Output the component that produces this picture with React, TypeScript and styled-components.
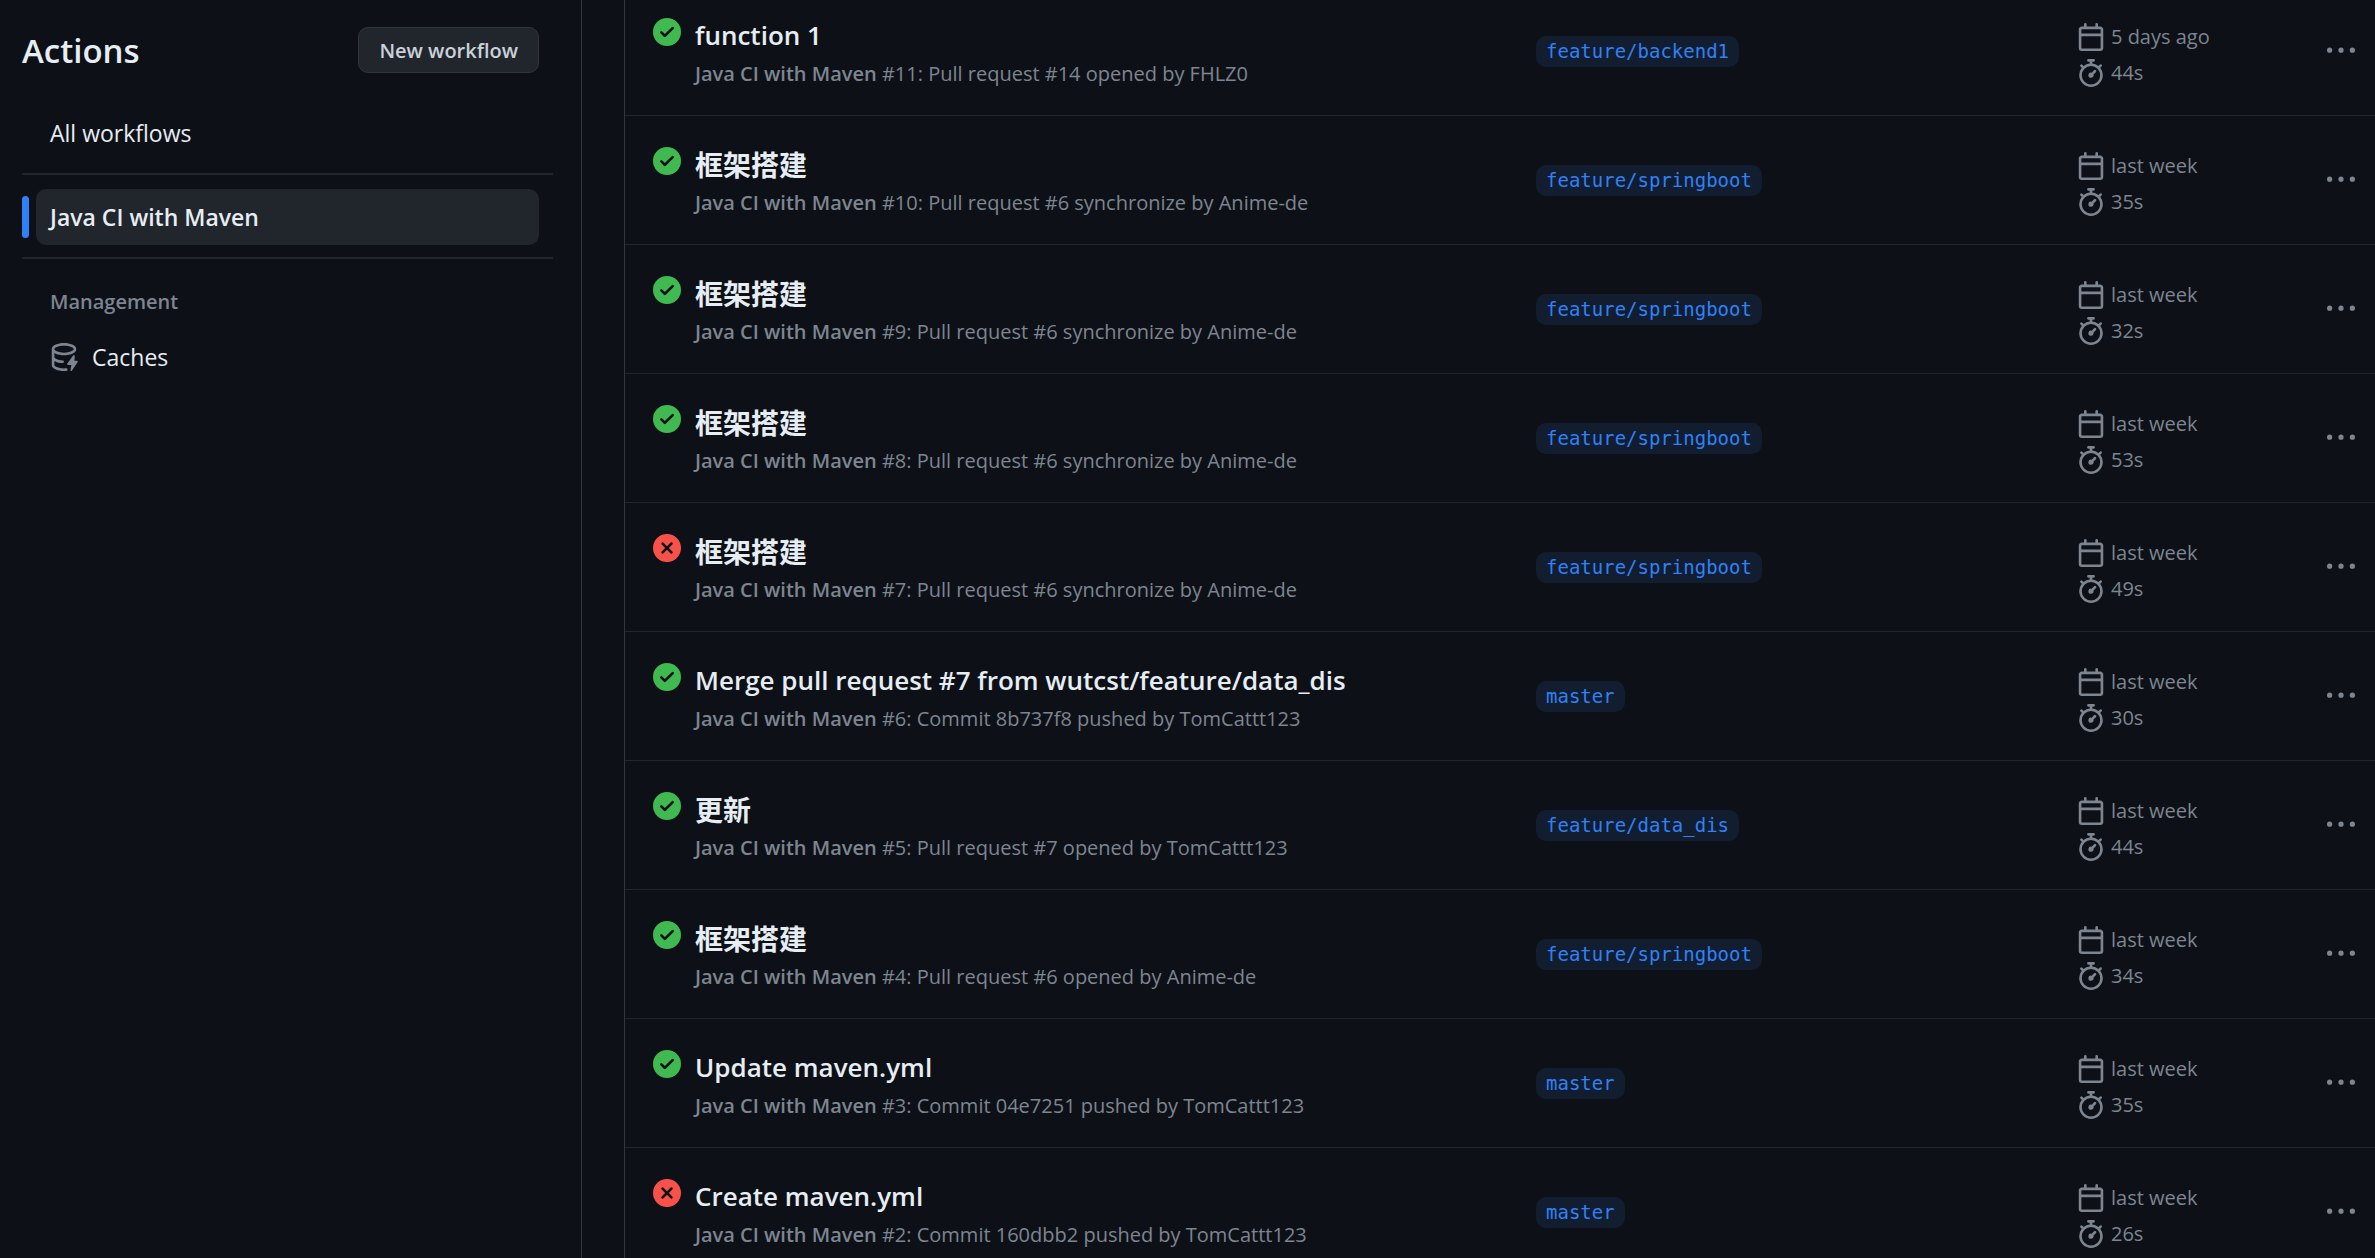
import React from "react";
import styled, { createGlobalStyle } from "styled-components";

const color = {
  canvas: "#0d1117",
  fg: "#e6edf3",
  muted: "#7d8590",
  accent: "#2f81f7",
  accentSubtle: "#121d2f",
  border: "#30363d",
  borderMuted: "#21262d",
  selected: "#21252c",
  success: "#3fb950",
  danger: "#f85149",
};

const GlobalStyle = createGlobalStyle`
  *, *::before, *::after { box-sizing: border-box; }
  body {
    margin: 0;
    background: ${color.canvas};
    color: ${color.fg};
    font-family: "Open Sans", "Noto Sans", "Noto Sans CJK SC", sans-serif;
    font-size: 20px;
  }
  a { color: inherit; text-decoration: none; }
  button { font-family: inherit; cursor: pointer; }
  ul { list-style: none; margin: 0; padding: 0; }
`;

const Layout = styled.div`
  display: flex;
  height: 100vh;
  overflow: hidden;
`;

const Sidebar = styled.aside`
  flex: 0 0 582px;
  padding: 27px 28px 0 22px;
  border-right: 1px solid ${color.border};
`;

const SidebarHeader = styled.header`
  display: flex;
  align-items: center;
  justify-content: space-between;
  margin-bottom: 32px;
  padding-right: 14px;
`;

const SidebarTitle = styled.h1`
  margin: 0;
  padding-top: 2px;
  font-size: 33px;
  line-height: 44px;
  font-weight: 600;
`;

const NewButton = styled.button`
  height: 46px;
  padding: 0 20px;
  border: 1px solid ${color.border};
  border-radius: 10px;
  background: ${color.borderMuted};
  color: #c9d1d9;
  font-size: 20px;
  font-weight: 600;
`;

const NavItem = styled.li`
  display: flex;
  align-items: center;
  gap: 7px;
`;

const NavMarker = styled.span<{ $active?: boolean }>`
  width: 7px;
  height: 42px;
  border-radius: 4px;
  background: ${(p) => (p.$active ? color.accent : "transparent")};
`;

const NavLink = styled.a<{ $active?: boolean }>`
  display: flex;
  flex: 1;
  align-items: center;
  gap: 14px;
  height: 56px;
  margin-right: 14px;
  padding: 0 14px;
  border-radius: 10px;
  background: ${(p) => (p.$active ? color.selected : "transparent")};
  font-size: 23px;
  font-weight: ${(p) => (p.$active ? 600 : 400)};
`;

const NavDivider = styled.li`
  height: 2px;
  margin: 12px 0 14px;
  background: ${color.borderMuted};
`;

const NavHeading = styled.h2`
  margin: 0;
  padding: 2px 0 0 28px;
  color: ${color.muted};
  font-size: 20px;
  line-height: 54px;
  font-weight: 600;
`;

const Icon = styled.svg<{ $color?: string }>`
  flex: none;
  width: 28px;
  height: 28px;
  fill: ${(p) => p.$color ?? color.muted};
`;

const Content = styled.main`
  flex: 1;
  min-width: 0;
  padding-left: 42px;
`;

const RunList = styled.ul`
  margin-top: -13px;
  border-left: 1px solid ${color.border};
`;

const RunRow = styled.li`
  display: grid;
  grid-template-columns: minmax(0, 883fr) minmax(0, 541fr) 250px 28px;
  align-items: center;
  height: 129px;
  padding: 0 20px 0 28px;
  border-bottom: 1px solid ${color.borderMuted};
`;

const RunMain = styled.div`
  display: flex;
  align-self: start;
  align-items: flex-start;
  gap: 14px;
  padding-top: 31px;
`;

const RunTitle = styled.a`
  display: block;
  font-size: 26px;
  line-height: 34px;
  font-weight: 600;

  &:lang(zh) {
    font-family: "Noto Sans CJK SC", sans-serif;
    font-size: 28px;
    font-weight: 700;
  }
`;

const RunInfo = styled.div`
  margin-top: 6px;
  color: ${color.muted};
  font-size: 20px;
  line-height: 32px;
`;

const WorkflowName = styled.span`
  font-weight: 600;
`;

const Branch = styled.a`
  justify-self: start;
  padding: 0 10px;
  border-radius: 10px;
  background: ${color.accentSubtle};
  color: ${color.accent};
  font-family: "DejaVu Sans Mono", "Liberation Mono", monospace;
  font-size: 19px;
  line-height: 31px;
`;

const Meta = styled.div`
  padding-top: 7px;
  color: ${color.muted};
`;

const MetaLine = styled.div`
  display: flex;
  align-items: center;
  gap: 6px;
  height: 36px;
`;

const MenuButton = styled.button`
  display: flex;
  padding: 0;
  border: 0;
  background: none;
`;

const paths = {
  success:
    "M8 16A8 8 0 1 1 8 0a8 8 0 0 1 0 16Zm3.78-9.72a.751.751 0 0 0-.018-1.042.751.751 0 0 0-1.042-.018L6.75 9.19 5.28 7.72a.751.751 0 0 0-1.042.018.751.751 0 0 0-.018 1.042l2 2a.75.75 0 0 0 1.06 0Z",
  failure:
    "M2.343 13.657A8 8 0 1 1 13.658 2.343 8 8 0 0 1 2.343 13.657ZM6.03 4.97a.751.751 0 0 0-1.042.018.751.751 0 0 0-.018 1.042L6.94 8 4.97 9.97a.749.749 0 0 0 .326 1.275.749.749 0 0 0 .734-.215L8 9.06l1.97 1.97a.749.749 0 0 0 1.275-.326.749.749 0 0 0-.215-.734L9.06 8l1.97-1.97a.749.749 0 0 0-.326-1.275.749.749 0 0 0-.734.215L8 6.94Z",
  calendar:
    "M4.75 0a.75.75 0 0 1 .75.75V2h5V.75a.75.75 0 0 1 1.5 0V2h1.25c.966 0 1.75.784 1.75 1.75v10.5A1.75 1.75 0 0 1 13.25 16H2.75A1.75 1.75 0 0 1 1 14.25V3.75C1 2.784 1.784 2 2.75 2H4V.75A.75.75 0 0 1 4.75 0ZM2.5 7.5v6.75c0 .138.112.25.25.25h10.5a.25.25 0 0 0 .25-.25V7.5Zm10.75-4H2.75a.25.25 0 0 0-.25.25V6h11V3.75a.25.25 0 0 0-.25-.25Z",
  stopwatch:
    "M5.75.75A.75.75 0 0 1 6.5 0h3a.75.75 0 0 1 0 1.5h-.75v1l-.001.041a6.724 6.724 0 0 1 3.464 1.435l.007-.006.75-.75a.749.749 0 0 1 1.275.326.749.749 0 0 1-.215.734l-.75.75-.006.007a6.75 6.75 0 1 1-10.548 0L2.72 5.03l-.75-.75a.751.751 0 0 1 .018-1.042.751.751 0 0 1 1.042-.018l.75.75.007.006A6.72 6.72 0 0 1 7.25 2.541V1.5H6.5a.75.75 0 0 1-.75-.75ZM8 14.5a5.25 5.25 0 1 0-.001-10.501A5.25 5.25 0 0 0 8 14.5Zm.389-6.7 1.33-1.33a.75.75 0 1 1 1.061 1.06L9.45 8.861A1.503 1.503 0 0 1 8 10.75a1.499 1.499 0 1 1 .389-2.95Z",
  kebab:
    "M8 9a1.5 1.5 0 1 0 0-3 1.5 1.5 0 0 0 0 3ZM1.5 9a1.5 1.5 0 1 0 0-3 1.5 1.5 0 0 0 0 3Zm13 0a1.5 1.5 0 1 0 0-3 1.5 1.5 0 0 0 0 3Z",
  cache:
    "M2.5 5.724V8c0 .248.238.7 1.169 1.159.874.43 2.144.745 3.62.822a.75.75 0 1 1-.078 1.498c-1.622-.085-3.102-.432-4.204-.975a5.565 5.565 0 0 1-.507-.28V12.5c0 .133.058.318.282.551.227.237.591.483 1.101.707 1.015.447 2.47.742 4.117.742.406 0 .802-.018 1.183-.052a.751.751 0 1 1 .134 1.494C8.89 15.98 8.45 16 8 16c-1.805 0-3.475-.32-4.721-.869-.623-.274-1.173-.619-1.579-1.041-.408-.425-.7-.964-.7-1.59v-9c0-.626.292-1.165.7-1.591.406-.42.956-.766 1.579-1.04C4.525.32 6.195 0 8 0c1.806 0 3.476.32 4.721.869.623.274 1.173.619 1.579 1.041.408.425.7.964.7 1.59 0 .626-.292 1.165-.7 1.591-.406.42-.956.766-1.578 1.04C11.476 6.68 9.806 7 8 7c-1.805 0-3.475-.32-4.721-.869a6.15 6.15 0 0 1-.779-.407Zm0-2.224c0 .133.058.318.282.551.227.237.591.483 1.101.707C4.898 5.205 6.353 5.5 8 5.5c1.646 0 3.101-.295 4.118-.742.508-.224.873-.471 1.1-.708.224-.232.282-.417.282-.55 0-.133-.058-.318-.282-.551-.227-.237-.591-.483-1.101-.707C11.102 1.795 9.647 1.5 8 1.5c-1.646 0-3.101.295-4.118.742-.508.224-.873.471-1.1.708-.224.232-.282.417-.282.55ZM13.2 7.2 9.9 11.7a.5.5 0 0 0 .4.8h1.9l-.5 3c-.1.5.5.7.8.3l3.3-4.9a.5.5 0 0 0-.4-.8h-1.5l.3-2.6c0-.5-.7-.7-1-.3Z",
};

function Glyph({ name, tint, label }: { name: keyof typeof paths; tint?: string; label?: string }) {
  return (
    <Icon viewBox="0 0 16 16" $color={tint} aria-hidden={label ? undefined : true} aria-label={label} role={label ? "img" : undefined}>
      <path d={paths[name]} />
    </Icon>
  );
}

type Run = {
  title: string;
  lang?: string;
  number: number;
  event: string;
  branch: string;
  date: string;
  duration: string;
  failed?: boolean;
};

const runs: Run[] = [
  { title: "function 1", number: 11, event: "Pull request #14 opened by FHLZ0", branch: "feature/backend1", date: "5 days ago", duration: "44s" },
  { title: "框架搭建", lang: "zh", number: 10, event: "Pull request #6 synchronize by Anime-de", branch: "feature/springboot", date: "last week", duration: "35s" },
  { title: "框架搭建", lang: "zh", number: 9, event: "Pull request #6 synchronize by Anime-de", branch: "feature/springboot", date: "last week", duration: "32s" },
  { title: "框架搭建", lang: "zh", number: 8, event: "Pull request #6 synchronize by Anime-de", branch: "feature/springboot", date: "last week", duration: "53s" },
  { title: "框架搭建", lang: "zh", number: 7, event: "Pull request #6 synchronize by Anime-de", branch: "feature/springboot", date: "last week", duration: "49s", failed: true },
  { title: "Merge pull request #7 from wutcst/feature/data_dis", number: 6, event: "Commit 8b737f8 pushed by TomCattt123", branch: "master", date: "last week", duration: "30s" },
  { title: "更新", lang: "zh", number: 5, event: "Pull request #7 opened by TomCattt123", branch: "feature/data_dis", date: "last week", duration: "44s" },
  { title: "框架搭建", lang: "zh", number: 4, event: "Pull request #6 opened by Anime-de", branch: "feature/springboot", date: "last week", duration: "34s" },
  { title: "Update maven.yml", number: 3, event: "Commit 04e7251 pushed by TomCattt123", branch: "master", date: "last week", duration: "35s" },
  { title: "Create maven.yml", number: 2, event: "Commit 160dbb2 pushed by TomCattt123", branch: "master", date: "last week", duration: "26s", failed: true },
];

function RunItem({ run }: { run: Run }) {
  return (
    <RunRow>
      <RunMain>
        <Glyph
          name={run.failed ? "failure" : "success"}
          tint={run.failed ? color.danger : color.success}
          label={run.failed ? "Failed" : "Succeeded"}
        />
        <div>
          <RunTitle href="#" lang={run.lang}>
            {run.title}
          </RunTitle>
          <RunInfo>
            <WorkflowName>Java CI with Maven</WorkflowName> #{run.number}: {run.event}
          </RunInfo>
        </div>
      </RunMain>
      <Branch href="#">{run.branch}</Branch>
      <Meta>
        <MetaLine>
          <Glyph name="calendar" />
          {run.date}
        </MetaLine>
        <MetaLine>
          <Glyph name="stopwatch" />
          {run.duration}
        </MetaLine>
      </Meta>
      <MenuButton type="button" aria-label="Show options">
        <Glyph name="kebab" />
      </MenuButton>
    </RunRow>
  );
}

export default function App() {
  return (
    <>
      <GlobalStyle />
      <Layout>
        <Sidebar>
          <SidebarHeader>
            <SidebarTitle>Actions</SidebarTitle>
            <NewButton type="button">New workflow</NewButton>
          </SidebarHeader>
          <nav aria-label="Actions">
            <ul>
              <NavItem>
                <NavMarker />
                <NavLink href="#">All workflows</NavLink>
              </NavItem>
              <NavDivider role="separator" />
              <NavItem>
                <NavMarker $active />
                <NavLink href="#" $active aria-current="page">
                  Java CI with Maven
                </NavLink>
              </NavItem>
              <NavDivider role="separator" />
            </ul>
            <NavHeading>Management</NavHeading>
            <ul>
              <NavItem>
                <NavMarker />
                <NavLink href="#">
                  <Glyph name="cache" />
                  Caches
                </NavLink>
              </NavItem>
            </ul>
          </nav>
        </Sidebar>
        <Content>
          <RunList>
            {runs.map((run) => (
              <RunItem key={run.number} run={run} />
            ))}
          </RunList>
        </Content>
      </Layout>
    </>
  );
}
